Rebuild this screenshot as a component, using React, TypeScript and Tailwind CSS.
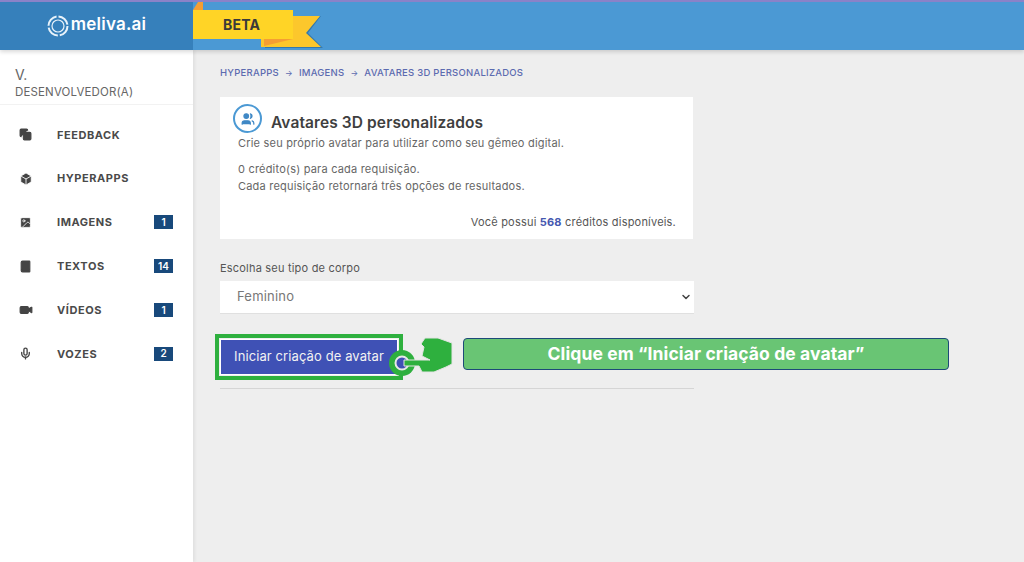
import { Copy, Box, Image, Book, Video, Mic, Users, ChevronDown } from "lucide-react";

const menu = [
  { label: "FEEDBACK", icon: "feedback", badge: "" },
  { label: "HYPERAPPS", icon: "box", badge: "" },
  { label: "IMAGENS", icon: "image", badge: "1" },
  { label: "TEXTOS", icon: "book", badge: "14" },
  { label: "VÍDEOS", icon: "video", badge: "1" },
  { label: "VOZES", icon: "mic", badge: "2" },
];

function MenuIcon({ name }: { name: string }) {
  const cls = "w-[13px] h-[13px] text-[#444] fill-[#444]";
  if (name === "feedback") return <Copy className={cls} strokeWidth={2} />;
  if (name === "box") return <Box className="w-[14px] h-[14px] text-white fill-[#444]" strokeWidth={1.5} />;
  if (name === "image") return <Image className="w-[13px] h-[13px] text-white fill-[#444]" strokeWidth={1.5} />;
  if (name === "book") return <Book className="w-[13px] h-[13px] text-[#444] fill-[#444]" strokeWidth={2} />;
  if (name === "video") return <Video className="w-[14px] h-[14px] text-[#444] fill-[#444]" strokeWidth={2} />;
  return <Mic className="w-[13px] h-[13px] text-[#444]" strokeWidth={2.5} />;
}

function Ribbon() {
  return (
    <svg className="absolute left-[193px] top-[2px] z-10" width="134" height="48" viewBox="0 0 134 48">
      <path d="M5 0 L10 0 L10 8 L0 8 Z" fill="#f59e33" />
      <path d="M72 14 H128 L115 31 L130 46 H72 Z" fill="#3479ae" />
      <path d="M68 14 H127 L113 31 L128 45 H68 Z" fill="#fcc72c" />
      <path d="M71 37 H100 L71 44 Z" fill="#f59e33" />
      <path d="M0 8 H100 V37 H0 Z" fill="#ffd426" />
    </svg>
  );
}

function Hand() {
  return (
    <svg className="absolute left-[386px] top-[336px] z-10" width="70" height="46" viewBox="0 0 70 46">
      <circle cx="16" cy="27" r="13" fill="#2eb03e" />
      <circle cx="16" cy="27" r="6.5" fill="#3f51b5" stroke="#e8e8e8" strokeWidth="2" />
      <path d="M18 24 H44 L36 20 L38 11 L35 8 L39 2 H52 L66 7 V28 L60 31 L48 36 L36 36 L33 30 H18 Z" fill="#2eb03e" stroke="#e4e4e4" strokeWidth="1" />
    </svg>
  );
}

export default function App() {
  return (
    <div className="relative w-[1024px] h-[562px] overflow-hidden bg-[#eeeeee] font-['Inter',sans-serif] text-[#555]">
      <header className="flex h-[50px] border-t-2 border-[#8a82c8] bg-[#4b99d4] shadow-[0_2px_4px_rgba(0,0,0,0.15)] relative z-10">
        <div className="flex w-[193px] items-center justify-center gap-[1px] bg-[#3680bb] pr-[1px] pb-[2px]">
          <svg width="24" height="24" viewBox="0 0 24 24" className="mt-[1px]">
            <circle cx="12" cy="12" r="9.5" fill="none" stroke="#e8f2fa" strokeWidth="2" strokeDasharray="13 2" />
            <circle cx="12" cy="12" r="6" fill="none" stroke="#e8f2fa" strokeWidth="1.2" />
          </svg>
          <span className="text-[17px] font-semibold text-white tracking-[0.2px]">meliva.ai</span>
        </div>
      </header>
      <Ribbon />
      <span className="absolute left-[223px] top-[14px] z-20 text-[14px] font-bold text-[#3a3a3a] tracking-[0.2px]">BETA</span>

      <div className="flex h-[512px]">
        <aside className="w-[193px] shrink-0 bg-white shadow-[2px_0_3px_rgba(0,0,0,0.06)]">
          <div className="h-[55px] border-b border-[#f2f2f2] pl-[15px] pt-[16px] text-[#666]">
            <div className="text-[14px] leading-[18px]">V.</div>
            <div className="text-[11.5px] leading-[16px] tracking-[0.15px]">DESENVOLVEDOR(A)</div>
          </div>
          <nav className="pt-[8px]">
            {menu.map((m) => (
              <div key={m.label} className="flex h-[43.8px] items-center pl-[19px] pr-[20px]">
                <span className="flex w-[38px] shrink-0">
                  <MenuIcon name={m.icon} />
                </span>
                <span className="flex-1 text-[11px] font-bold tracking-[0.55px] text-[#4a4a4a]">{m.label}</span>
                {m.badge && (
                  <span className="flex h-[14px] w-[19px] items-center justify-center bg-[#18497b] text-[10px] font-semibold text-white">
                    {m.badge}
                  </span>
                )}
              </div>
            ))}
          </nav>
        </aside>

        <main className="w-[474px] ml-[27px] pt-[16px]">
          <nav className="flex items-center text-[#5c6bb0] text-[9.5px] font-medium tracking-[0.25px] h-[14px]">
            <span>HYPERAPPS</span>
            <span className="mx-[6px] text-[8px]">→</span>
            <span>IMAGENS</span>
            <span className="mx-[6px] text-[8px]">→</span>
            <span>AVATARES 3D PERSONALIZADOS</span>
          </nav>

          <section className="mt-[17px] h-[142px] w-[473px] bg-white pl-[13px] pr-[17px] pt-[7px] relative">
            <div className="flex items-start">
              <div className="flex h-[29px] w-[29px] items-center justify-center rounded-full border-[2px] border-[#4b99d4]">
                <Users className="h-[14px] w-[14px] text-[#3f88c5] fill-[#3f88c5]" strokeWidth={2} />
              </div>
              <h1 className="ml-[9px] mt-[9px] text-[15.5px] leading-[20px] font-semibold text-[#3f3f3f] tracking-[0.1px]">Avatares 3D personalizados</h1>
            </div>
            <p className="mt-[2px] ml-[5px] text-[11px] leading-[17px] tracking-[0.2px] text-[#666]">Crie seu próprio avatar para utilizar como seu gêmeo digital.</p>
            <p className="mt-[9px] ml-[5px] text-[11px] leading-[17px] tracking-[0.2px] text-[#666]">
              0 crédito(s) para cada requisição.
              <br />
              Cada requisição retornará três opções de resultados.
            </p>
            <p className="absolute bottom-[8px] right-[17px] text-[11px] leading-[17px] tracking-[0.2px] text-[#555]">
              Você possui <b className="font-bold text-[#4658b0]">568</b> créditos disponíveis.
            </p>
          </section>

          <label className="mt-[21px] block text-[11px] leading-[16px] tracking-[0.2px] text-[#555]">Escolha seu tipo de corpo</label>
          <div className="mt-[5px] flex h-[33px] w-[474px] items-center justify-between border-b border-[#e0e0e0] bg-white pl-[17px] pr-[2px] text-[13px] tracking-[0.2px] text-[#777]">
            <span>Feminino</span>
            <ChevronDown className="h-[12px] w-[12px] text-[#444]" strokeWidth={3} />
          </div>

          <div className="mt-[20px] -ml-[5px] w-[188px] h-[46px] border-[4px] border-[#2eb03e] p-[1px] bg-[#eeeeee]">
            <button className="h-full w-full bg-[#3f51b5] text-[13px] text-[#f2f2f2] tracking-[0.1px] border border-white">Iniciar criação de avatar</button>
          </div>
          <div className="mt-[8px] h-[1px] w-[474px] bg-[#d5d5d5]" />
        </main>

        <div className="ml-[-205px]" />
      </div>

      <Hand />
      <div className="absolute left-[463px] top-[338px] flex h-[32px] w-[486px] items-center justify-center rounded-[4px] border-[1.5px] border-[#1d4a78] bg-[#69c574] text-[17.5px] font-bold text-white tracking-[0.1px]">
        Clique em “Iniciar criação de avatar”
      </div>
    </div>
  );
}
